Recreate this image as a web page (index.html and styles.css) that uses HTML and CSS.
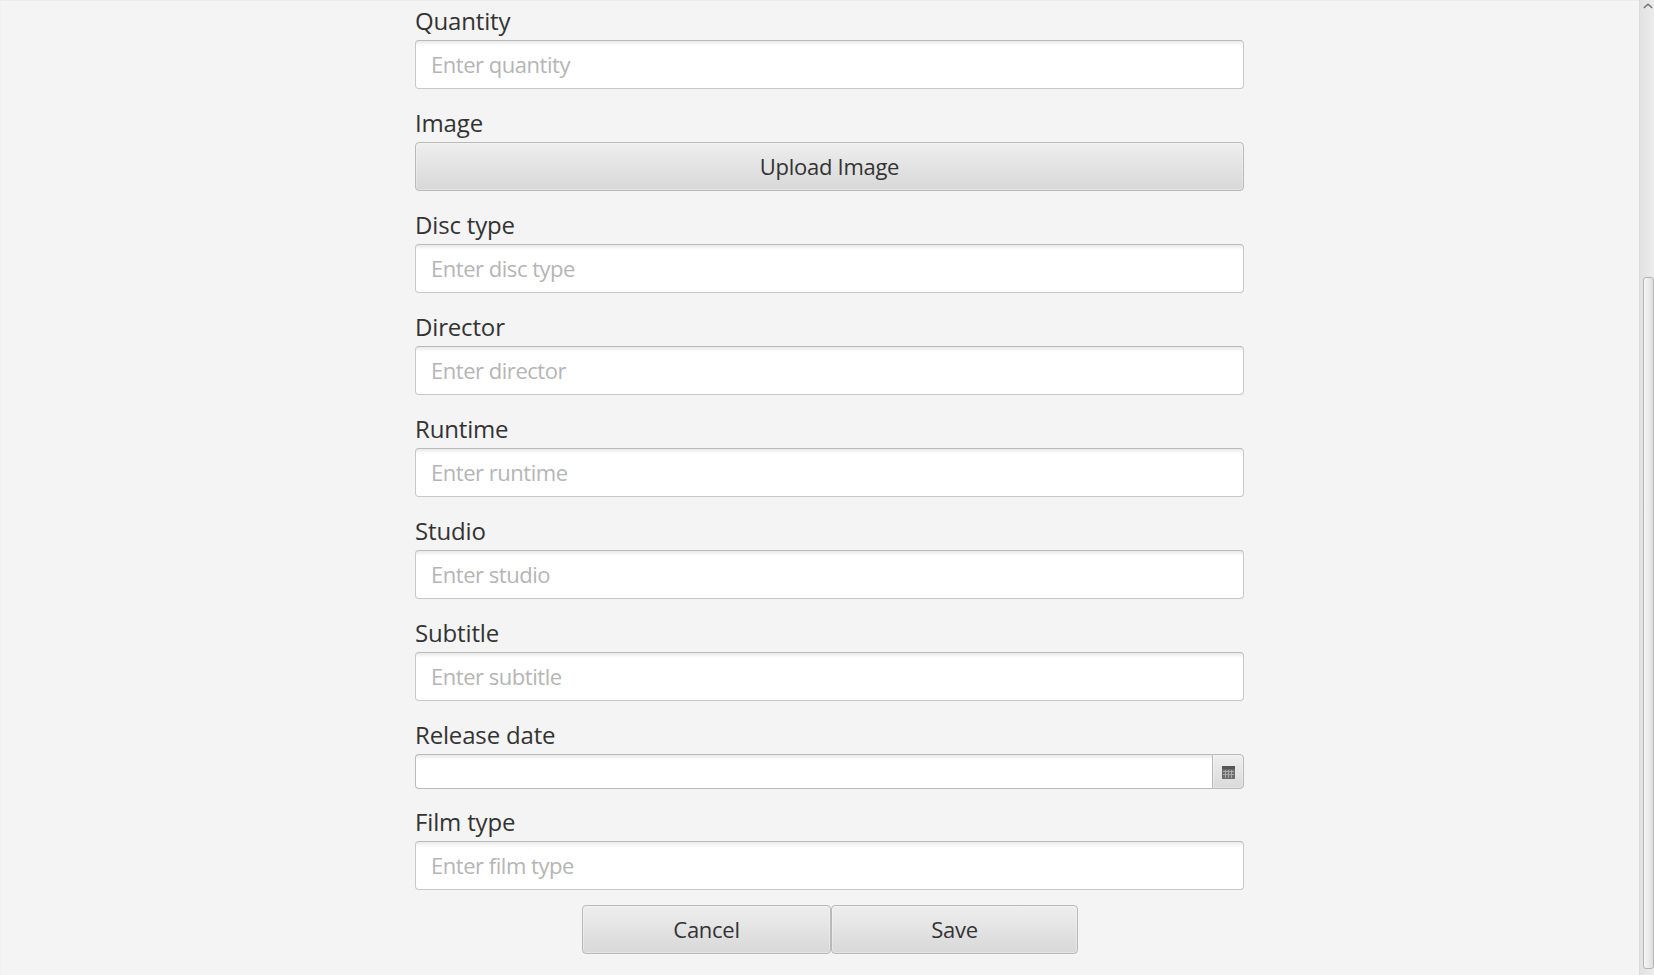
FILE: index.html
```
<!DOCTYPE html>
<html lang="en">
<head>
<meta charset="utf-8">
<title>Film details</title>
<link rel="stylesheet" href="styles.css">
</head>
<body>
<main class="viewport">
<form class="form">
<label class="label" for="quantity">Quantity</label>
<input class="field" id="quantity" placeholder="Enter quantity">
<label class="label" for="image">Image</label>
<button class="button upload" id="image" type="button">Upload Image</button>
<label class="label" for="disc">Disc type</label>
<input class="field" id="disc" placeholder="Enter disc type">
<label class="label" for="director">Director</label>
<input class="field" id="director" placeholder="Enter director">
<label class="label" for="runtime">Runtime</label>
<input class="field" id="runtime" placeholder="Enter runtime">
<label class="label" for="studio">Studio</label>
<input class="field" id="studio" placeholder="Enter studio">
<label class="label" for="subtitle">Subtitle</label>
<input class="field" id="subtitle" placeholder="Enter subtitle">
<label class="label" for="date">Release date</label>
<div class="date">
<input class="date-input" id="date">
<button class="date-button" type="button" aria-label="Choose date">
<svg width="13" height="13" viewBox="0 0 13 13"><path fill="#555" d="M0 0h13v3H0z"/><path fill="#6d6d6d" d="M0 3h13v10H0z"/><path stroke="#aaa" d="M1 5.5h11M1 8.5h11M3.5 4v8M6.5 4v8M9.5 4v8"/></svg>
</button>
</div>
<label class="label label-film" for="film">Film type</label>
<input class="field" id="film" placeholder="Enter film type">
<div class="actions">
<button class="button cancel" type="button">Cancel</button>
<button class="button save" type="button">Save</button>
</div>
</form>
</main>
<aside class="scrollbar">
<svg class="arrow" width="10" height="6" viewBox="0 0 10 6"><path d="M.8 5 5 1.2 9.2 5" fill="none" stroke="#737373" stroke-width="1.5"/></svg>
<div class="thumb"></div>
</aside>
</body>
</html>
```
FILE: styles.css
```
* { box-sizing: border-box; }
body {
  margin: 0;
  height: 975px;
  display: flex;
  overflow: hidden;
  background: #f4f4f4;
  color: #333;
  font-family: "Open Sans", "Noto Sans", sans-serif;
}
.viewport {
  flex: 1;
  border-top: 1px solid #ececec;
  border-left: 1px solid #f0f0f0;
}
.form {
  width: 829px;
  margin-left: 414px;
  display: flex;
  flex-direction: column;
}
.label {
  height: 53px;
  padding-top: 18px;
  line-height: 32px;
  font-size: 24px;
  letter-spacing: -0.16px;
}
.label:first-child { height: 39px; padding-top: 4px; }
.label-film { height: 52px; padding-top: 17px; }
.field, .button {
  height: 49px;
  margin: 0;
  font-family: inherit;
  font-size: 22px;
  color: #333;
  border-radius: 4px;
}
.field {
  width: 100%;
  padding: 0 15px 2px;
  letter-spacing: -0.47px;
  border: 1px solid #c8c8c8;
  border-top-color: #bababa;
  background: linear-gradient(#e9e9e9, #fff 5px);
}
.field::placeholder { color: #b5b5b5; opacity: 1; }
.button {
  padding: 0 0 2px;
  letter-spacing: -0.28px;
  border: 1px solid #b9b9b9;
  background: linear-gradient(#eee, #d8d8d8);
  box-shadow: inset 0 0 0 1px rgba(255, 255, 255, .3);
}
.date { display: flex; height: 35px; }
.date-input {
  flex: 1;
  min-width: 0;
  border: 1px solid #bababa;
  border-right: 0;
  border-radius: 4px 0 0 4px;
  background: linear-gradient(#e9e9e9, #fff 5px);
}
.date-button {
  width: 32px;
  padding: 1px 0 0;
  display: flex;
  align-items: center;
  justify-content: center;
  border: 1px solid #b9b9b9;
  border-radius: 0 4px 4px 0;
  background: linear-gradient(#efefef, #dadada);
  box-shadow: inset 0 0 0 1px rgba(255, 255, 255, .3);
}
.actions { display: flex; margin: 15px 0 0 167px; }
.cancel { width: 249px; }
.save { width: 247px; }
.scrollbar {
  width: 15px;
  padding: 3px 0 6px 3px;
  display: flex;
  flex-direction: column;
  border-left: 1px solid #dcdcdc;
  background: linear-gradient(90deg, #e2e2e2, #ececec);
}
.arrow { display: block; margin-bottom: 268px; }
.thumb {
  flex: 1;
  width: 11px;
  border: 1px solid #b4b4b4;
  border-radius: 3px;
  background: linear-gradient(90deg, #f6f6f6, #dedede);
}
```
